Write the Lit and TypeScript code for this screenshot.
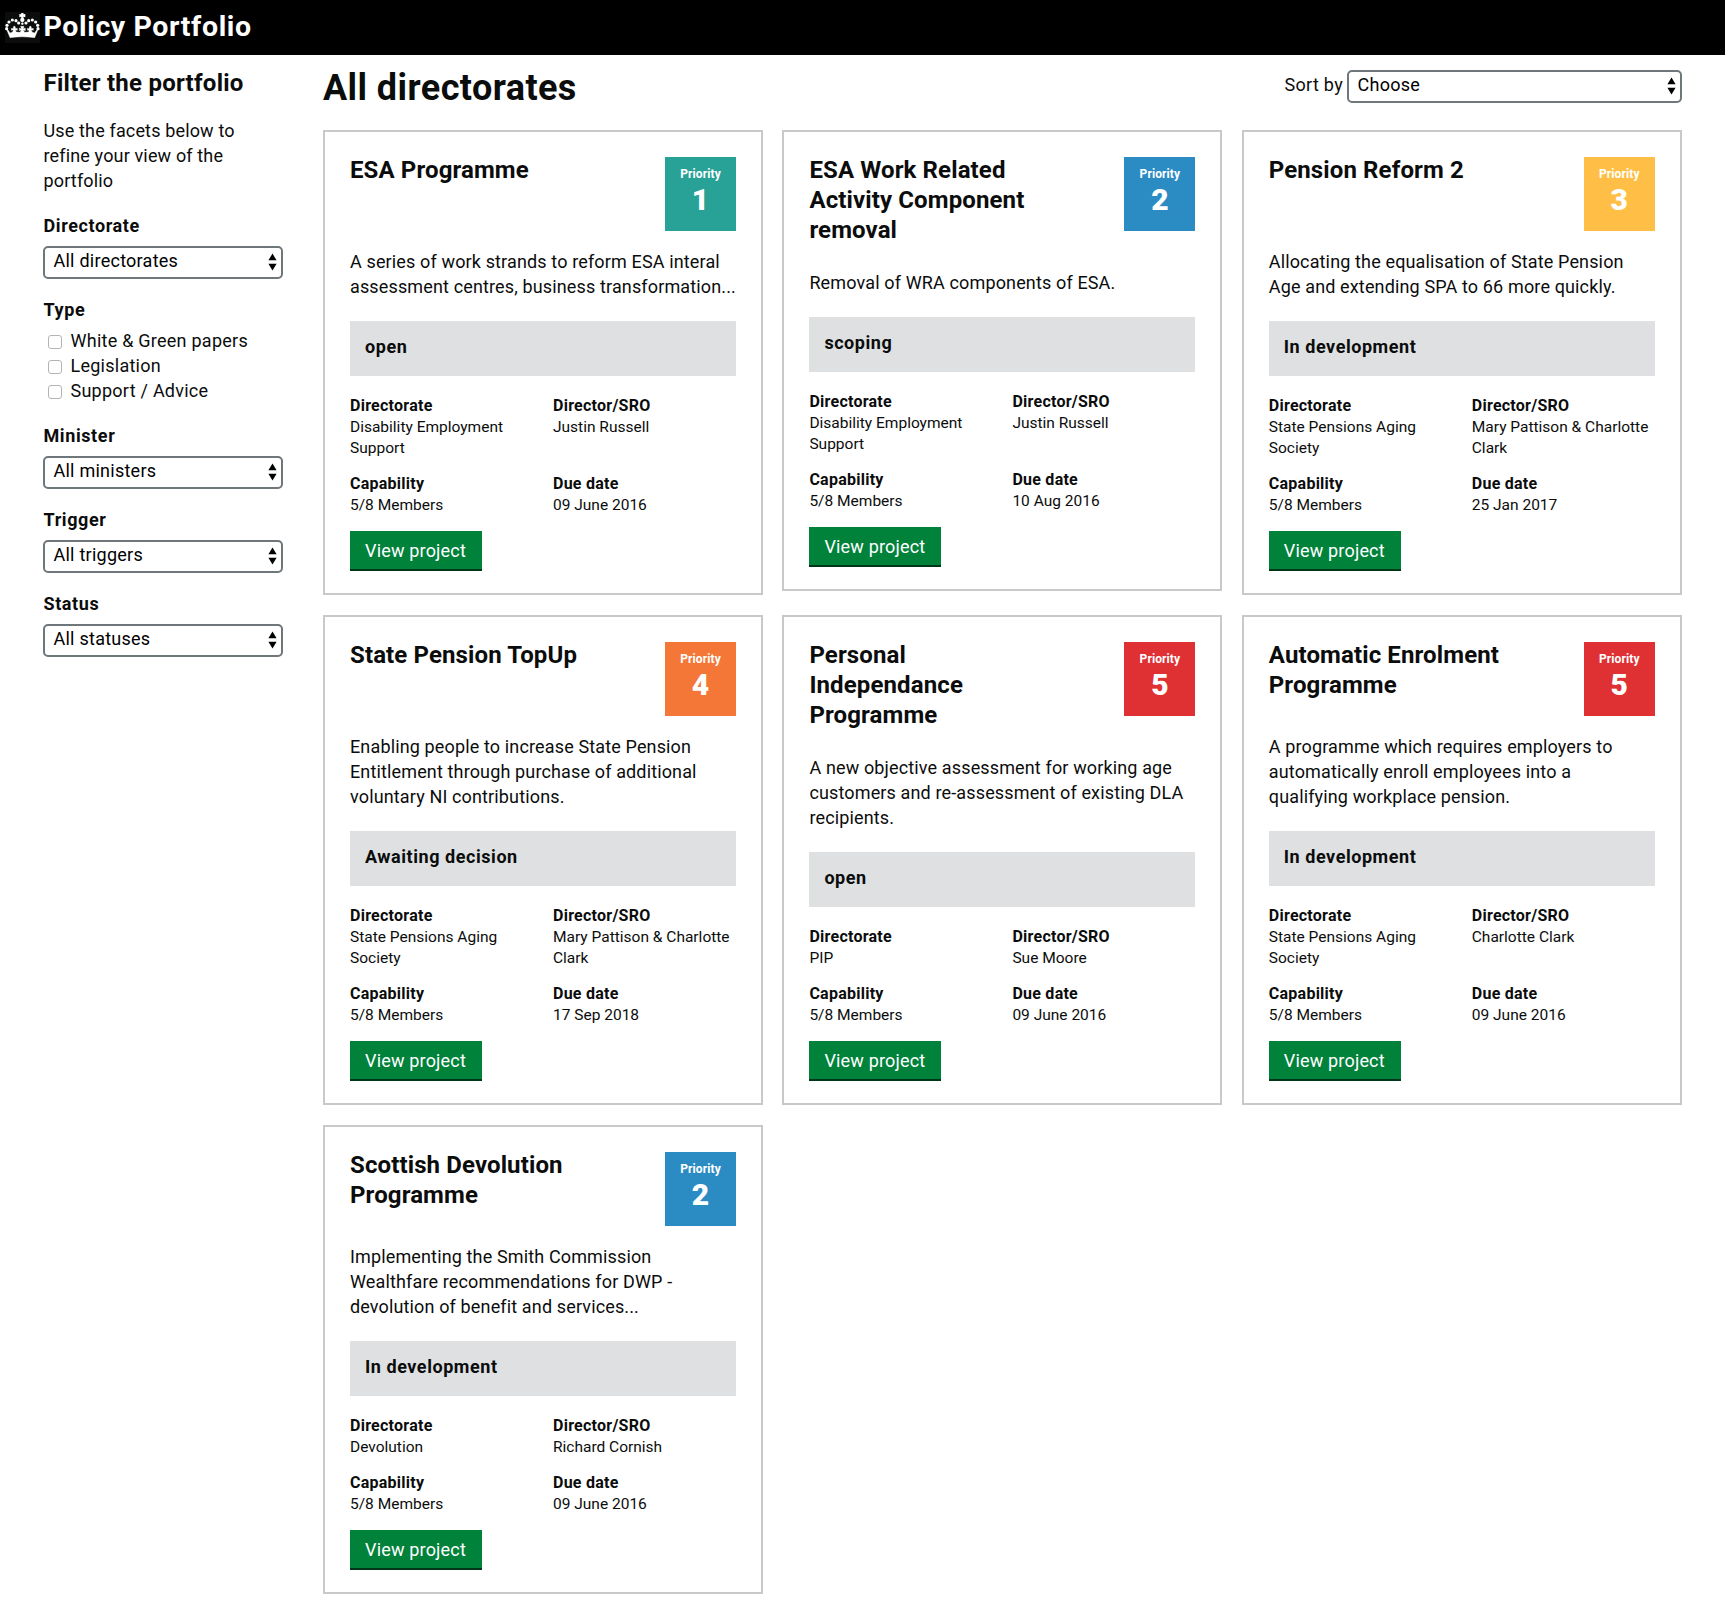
import { LitElement, html, css, svg } from "lit";
import { customElement, property } from "lit/decorators.js";

interface Project {
  title: string;
  priority: number;
  summary: string;
  status: string;
  directorate: string;
  director: string;
  due: string;
}

const PROJECTS: Project[] = [
  { title: "ESA Programme", priority: 1, summary: "A series of work strands to reform ESA interal\nassessment centres, business transformation...", status: "open", directorate: "Disability Employment\nSupport", director: "Justin Russell", due: "09 June 2016" },
  { title: "ESA Work Related\nActivity Component\nremoval", priority: 2, summary: "Removal of WRA components of ESA.", status: "scoping", directorate: "Disability Employment\nSupport", director: "Justin Russell", due: "10 Aug 2016" },
  { title: "Pension Reform 2", priority: 3, summary: "Allocating the equalisation of State Pension\nAge and extending SPA to 66 more quickly.", status: "In development", directorate: "State Pensions Aging\nSociety", director: "Mary Pattison & Charlotte\nClark", due: "25 Jan 2017" },
  { title: "State Pension TopUp", priority: 4, summary: "Enabling people to increase State Pension\nEntitlement through purchase of additional\nvoluntary NI contributions.", status: "Awaiting decision", directorate: "State Pensions Aging\nSociety", director: "Mary Pattison & Charlotte\nClark", due: "17 Sep 2018" },
  { title: "Personal\nIndependance\nProgramme", priority: 5, summary: "A new objective assessment for working age\ncustomers and re-assessment of existing DLA\nrecipients.", status: "open", directorate: "PIP", director: "Sue Moore", due: "09 June 2016" },
  { title: "Automatic Enrolment\nProgramme", priority: 5, summary: "A programme which requires employers to\nautomatically enroll employees into a\nqualifying workplace pension.", status: "In development", directorate: "State Pensions Aging\nSociety", director: "Charlotte Clark", due: "09 June 2016" },
  { title: "Scottish Devolution\nProgramme", priority: 2, summary: "Implementing the Smith Commission\nWealthfare recommendations for DWP -\ndevolution of benefit and services...", status: "In development", directorate: "Devolution", director: "Richard Cornish", due: "09 June 2016" },
];

@customElement("select-box")
class SelectBox extends LitElement {
  @property() value = "";
  static styles = css`
    :host { display: block; }
    .box { box-sizing: border-box; height: 33px; border: 2px solid #6f777b; border-radius: 5px; background: #fff; color: #000; display: flex; justify-content: space-between; padding: 0 4px 0 8.5px; font-size: 18px; line-height: 25px; letter-spacing: 0.25px; }
    .arrows { width: 9px; height: 18px; margin-top: 5px; }
  `;
  render() {
    return html`<div class="box"><span>${this.value}</span>
      <svg class="arrows" viewBox="0 0 9 18"><path d="M0.4 7.2 4.5 0.6 8.6 7.2ZM0.4 10.8 4.5 17.4 8.6 10.8Z" /></svg></div>`;
  }
}

@customElement("project-card")
class ProjectCard extends LitElement {
  @property({ attribute: false }) project!: Project;
  static styles = css`
    :host { display: block; }
    .card { border: 2px solid #c9c9c9; padding: 25px 25px 22px; }
    .head { display: flex; justify-content: space-between; align-items: flex-start; min-height: 92px; }
    .title { margin: -2px 0 25px; font-size: 24px; line-height: 30px; font-weight: 700; letter-spacing: 0.12px; white-space: pre-line; }
    .badge { width: 71px; height: 74px; color: #fff; font-weight: 700; text-align: center; }
    .p1 { background: #28a197; }
    .p2 { background: #2b8cc4; }
    .p3 { background: #ffbf47; }
    .p4 { background: #f47738; }
    .p5 { background: #df3034; }
    .word { font-size: 12px; line-height: 16px; padding-top: 9px; letter-spacing: 0.1px; }
    .num { font-size: 30px; line-height: 36px; font-weight: 900; }
    .summary { margin: 0; font-size: 18px; line-height: 25px; letter-spacing: 0.14px; white-space: pre-line; }
    .status { margin: 22px 0 19px; height: 55px; box-sizing: border-box; padding: 13px 15px 0; background: #dee0e2; font-size: 18px; line-height: 25px; font-weight: 700; letter-spacing: 0.55px; }
    .meta { display: grid; grid-template-columns: 183px 183px; column-gap: 20px; row-gap: 14px; margin: 0; font-size: 16px; line-height: 21px; }
    .meta div { white-space: nowrap; }
    dt { font-weight: 700; height: 22px; letter-spacing: 0.25px; }
    dd { margin: 0; font-size: 15.5px; white-space: pre; }
    .button { box-sizing: border-box; width: 132px; height: 40px; margin-top: 15px; border-bottom: 2px solid #003618; background: #00823b; color: #fff; font-size: 18px; line-height: 40px; letter-spacing: 0.18px; padding-left: 15px; white-space: nowrap; }
  `;
  render() {
    const p = this.project;
    return html`<article class="card">
      <div class="head">
        <h2 class="title">${p.title}</h2>
        <div class="badge p${p.priority}"><div class="word">Priority</div><div class="num">${p.priority}</div></div>
      </div>
      <p class="summary">${p.summary}</p>
      <div class="status">${p.status}</div>
      <dl class="meta">
        <div><dt>Directorate</dt><dd>${p.directorate}</dd></div>
        <div><dt>Director/SRO</dt><dd>${p.director}</dd></div>
        <div><dt>Capability</dt><dd>5/8 Members</dd></div>
        <div><dt>Due date</dt><dd>${p.due}</dd></div>
      </dl>
      <div class="button">View project</div>
    </article>`;
  }
}

@customElement("app-root")
class AppRoot extends LitElement {
  static styles = css`
    :host { display: block; min-height: 1614px; background: #fff; color: #0b0c0c; font-family: Roboto, "Liberation Sans", sans-serif; font-size: 18px; line-height: 25px; }
    .bar { height: 55px; background: #000; color: #fff; display: flex; padding-left: 5px; }
    .crown { width: 35px; height: 31px; margin-top: 12px; background: #0b0c0c; }
    .brand { margin-left: 3.5px; font-size: 28.5px; line-height: 53px; font-weight: 700; letter-spacing: 0.63px; }
    .page { display: grid; grid-template-columns: 240px 1359px; column-gap: 40px; padding-left: 43px; }
    .filters { padding-top: 13px; letter-spacing: 0.15px; }
    .filters h2 { margin: 0 0 20px 0.5px; font-size: 24px; line-height: 30px; letter-spacing: 0.25px; }
    .intro { margin: 0 0 20px 0.5px; white-space: pre-line; }
    .label { margin: 0 0 8px 0.5px; font-weight: 700; height: 25px; letter-spacing: 0.6px; }
    .field { height: 84px; }
    .checks { height: 126px; }
    .checks .label { margin-bottom: 6px; }
    .check { display: flex; height: 25px; padding-left: 5px; letter-spacing: 0.25px; }
    .tick { box-sizing: border-box; width: 14px; height: 14px; border: 1px solid #b4b4b4; border-radius: 3px; margin: 7px 8.5px 0 0; }
    .top { display: flex; justify-content: space-between; height: 75px; }
    h1 { margin: 12px 0 0; font-size: 36px; line-height: 42px; letter-spacing: 0.42px; }
    .sort { display: flex; gap: 4px; padding-top: 15px; letter-spacing: 0.3px; }
    .sort span { padding-top: 2px; }
    .sort select-box { width: 335px; }
    .cards { display: grid; grid-template-columns: repeat(3, 440px); column-gap: 19.4px; row-gap: 20px; align-items: start; }
  `;
  private crown() {
    const balls = [[20, 86], [21, 76], [27, 66], [37, 60], [48, 62], [56, 69]];
    return svg`<g fill="#fff">
      ${balls.map(([x, y]) => svg`<circle cx=${x} cy=${y} r="4.8"/><circle cx=${134 - x} cy=${y} r="4.8"/>`)}
      <path d="M63 39H71L70 43 76 42V52L70 50 71 55H63L64 50 58 52V42L64 43Z"/>
      <circle cx="67" cy="60" r="6.5"/><circle cx="67" cy="71" r="3.6"/>
    </g>`;
  }
  private field(label: string, value: string) {
    return html`<div class="field"><div class="label">${label}</div><select-box .value=${value}></select-box></div>`;
  }
  render() {
    return html`<header class="bar">
        <svg class="crown" viewBox="15 36 105 93">${this.crown()}
          <path fill="#fff" stroke="#fff" stroke-width="1" stroke-linejoin="round" d="M19 86 25 91 30 99 38 96 40 89 34 91V85L39 86 41 79H45L47 86 52 85V91L47 90 48 96 60 97 65 90 58 92V84L64 86 62 79H72L70 86 76 84V92L69 90 74 97 86 96 87 90 82 91V85L87 86 89 79H93L95 86 100 85V91L94 89 96 96 104 99 109 91 115 86 104 113Q67 108 30 113Z" /></svg>
        <div class="brand">Policy Portfolio</div>
      </header>
      <div class="page">
        <aside class="filters">
          <h2>Filter the portfolio</h2>
          <p class="intro">Use the facets below to\nrefine your view of the\nportfolio</p>
          ${this.field("Directorate", "All directorates")}
          <div class="checks"><div class="label">Type</div>
            ${["White & Green papers", "Legislation", "Support / Advice"].map((t) => html`<div class="check"><span class="tick"></span>${t}</div>`)}
          </div>
          ${this.field("Minister", "All ministers")}
          ${this.field("Trigger", "All triggers")}
          ${this.field("Status", "All statuses")}
        </aside>
        <main>
          <div class="top"><h1>All directorates</h1>
            <div class="sort"><span>Sort by</span><select-box .value=${"Choose"}></select-box></div></div>
          <div class="cards">${PROJECTS.map((p) => html`<project-card .project=${p}></project-card>`)}</div>
        </main>
      </div>`;
  }
}
